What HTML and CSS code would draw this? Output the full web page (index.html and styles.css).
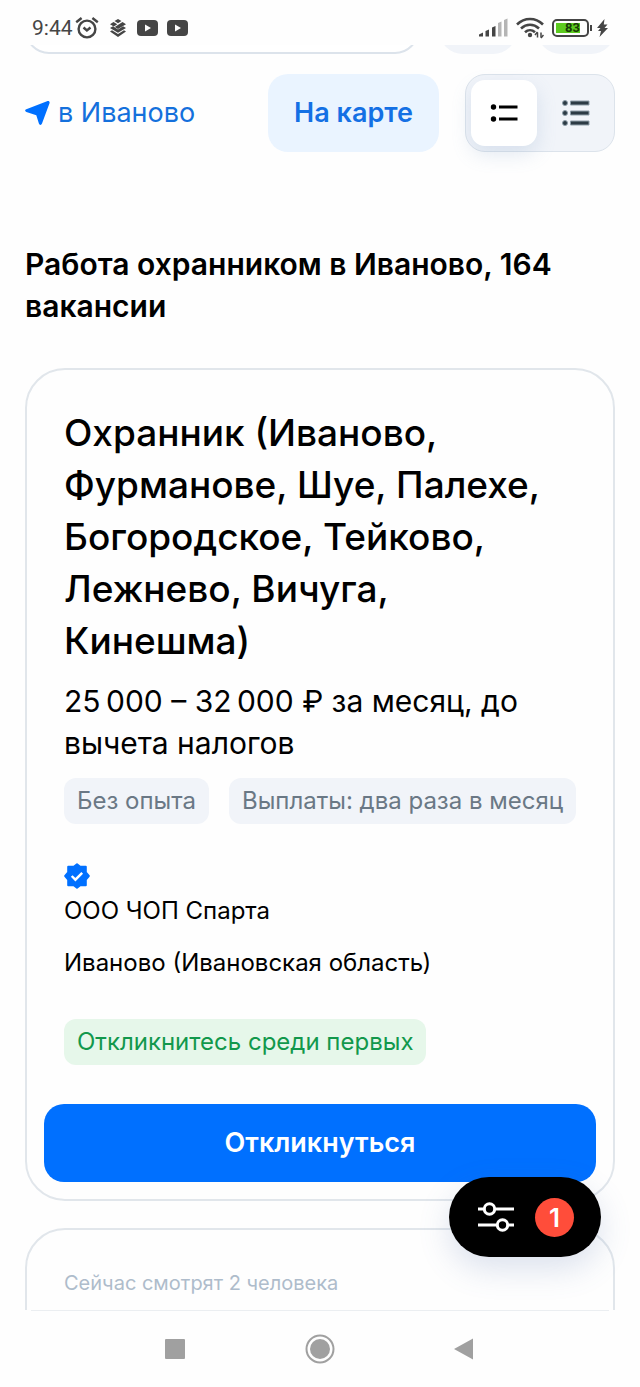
FILE: index.html
```
<!doctype html>
<html lang="ru">
<head>
	<meta charset="UTF-8">
	<meta name="viewport" content="width=device-width, initial-scale=1">
	<title>Работа охранником в Иваново</title>
	<link rel="stylesheet" href="styles.css">
</head>
<body>

	<!-- статус-бар телефона -->
	<header class="status">
		<div class="status-left">
			<span class="clock">9:44</span>
			<svg class="ico-alarm" width="24" height="22" viewBox="0 0 24 22" fill="none" stroke="#454545" stroke-width="2.4">
				<circle cx="12" cy="12" r="8.4"/>
				<path d="M8.5 10.5l3.4 3 3.6-3M1.2 5.2L6.6 1M22.8 5.2L17.4 1"/>
			</svg>
			<svg class="ico-layers" width="18" height="18" viewBox="0 0 18 18" fill="#454545">
				<path d="M9 0l3.500 2.100L9 4.200 5.500 2.100z"/>
				<path d="M4.500 3L8.300 5.300 4.800 7.400 1 5.200zM13.500 3L17 5.200 9 10l-3.200-1.900z"/>
				<path d="M1 9l3-1.800 5 3.200 5-3.200L17 9l-8 4.800z"/>
				<path d="M1 12.500l2-1.200 6 3.700 6-3.700 2 1.200L9 18z"/>
			</svg>
			<svg class="ico-tube" width="21" height="16" viewBox="0 0 21 16"><rect width="21" height="16" rx="4" fill="#454545"/><path d="M8 4.500v7l6-3.500z" fill="#fff"/></svg>
			<svg class="ico-tube" width="21" height="16" viewBox="0 0 21 16"><rect width="21" height="16" rx="4" fill="#454545"/><path d="M8 4.500v7l6-3.500z" fill="#fff"/></svg>
		</div>
		<div class="status-right">
			<svg width="29" height="19" viewBox="0 0 29 19">
				<path d="M0 18.500v-2l4-2v4zM6.500 18.500v-5.500l3.500-1.500v7zM13 18.500V9.500l3.500-1.500v10.500z" fill="#454545"/>
				<path d="M19 18.500V5l3.500-1.500v15zM25 18.500V2l3.500-1.500v18z" fill="#b5b5b5"/>
			</svg>
			<svg width="28" height="22" viewBox="0 0 28 22" fill="none" stroke="#454545" stroke-width="2.600">
				<path d="M1 7.500c7.500-7.400 18.500-7.400 26 0M5 11.500c5.500-5 12.500-5 18 0M9 15.300c3-2.800 7-2.800 10 0"/>
				<circle cx="14" cy="18" r="2.200" fill="#454545" stroke="none"/>
				<path d="M21.500 15.500v5M25 15.500v5" stroke-width="1.500"/>
				<path d="M21.500 15l-2.500 3M25 21l2.500-3" stroke-width="1.500"/>
			</svg>
			<div class="battery"><span class="battery-level">83</span></div>
			<svg width="11" height="18" viewBox="0 0 11 18"><path d="M7.500 0L0 9h3.500L1 12h3l-1.500 6L11 9H7.500l3-3.500H6.800z" fill="#454545"/></svg>
		</div>
	</header>

	<main class="feed">
		<!-- строка поиска, уехавшая вверх -->
		<div class="search-row">
			<input class="search-input" type="text" aria-label="Поиск">
			<button class="search-btn" type="button" aria-label="Найти"></button>
			<button class="search-btn" type="button" aria-label="Ещё"></button>
		</div>

		<div class="toolbar">
			<a class="region" href="#">
				<svg width="26" height="26" viewBox="0 0 26 26"><path d="M1.300 9.200L22 1.200c1.900-.7 3 .3 2.500 2.100L17 23.500c-.7 1.900-2.500 1.900-3.100 0l-2.600-8.200-9.900-3.400c-1.700-.6-1.700-2-.1-2.700z" fill="#0070ff"/></svg>
				<span>в Иваново</span>
			</a>
			<button class="map-btn" type="button">На карте</button>
			<div class="switch">
				<button class="switch-item active" type="button" aria-label="Подробный список">
					<svg width="28" height="18" viewBox="0 0 28 18"><circle cx="3.500" cy="3" r="2.700"/><circle cx="3.500" cy="15" r="2.700"/><path d="M9 1.500H27.500v3H9zM9 13.500H27.500v3H9z"/></svg>
				</button>
				<button class="switch-item" type="button" aria-label="Краткий список">
					<svg width="28" height="26" viewBox="0 0 28 26" fill="#2c3a44" stroke="#8e9da8" stroke-width="1"><circle cx="3" cy="3" r="2.500"/><circle cx="3" cy="13" r="2.500"/><circle cx="3" cy="23" r="2.500"/><path d="M8.500 1h18.500v4H8.500zM8.500 11h18.500v4H8.500zM8.500 21h18.500v4H8.500z"/></svg>
				</button>
			</div>
		</div>

		<h1 class="title">Работа охранником в Иваново, 164 вакансии</h1>

		<article class="card">
			<div class="card-body">
				<h2 class="card-title">Охранник (Иваново, Фурманове, Шуе, Палехе, Богородское, Тейково, Лежнево, Вичуга, Кинешма)</h2>
				<p class="salary">25&#8239;000 – 32&#8239;000 ₽ за месяц, до вычета налогов</p>
				<div class="tags">
					<span class="tag">Без опыта</span>
					<span class="tag">Выплаты: два раза в месяц</span>
				</div>
				<svg class="verified" width="26" height="26" viewBox="0 0 26 26">
					<path d="M13 1.200l3.200 2.600h5.600v5.500L24.800 13l-3 3.700v5.500h-5.600L13 24.800l-3.200-2.600H4.200v-5.500L1.200 13l3-3.700V3.800h5.600z" fill="#0070ff" stroke="#0070ff" stroke-width="2" stroke-linejoin="round"/>
					<path d="M7.700 13l3.700 3.700 6.800-6.900" fill="none" stroke="#fff" stroke-width="2.400"/>
				</svg>
				<p class="company">ООО ЧОП Спарта</p>
				<p class="place">Иваново (Ивановская область)</p>
				<span class="tag tag-green">Откликнитесь среди первых</span>
			</div>
			<button class="respond" type="button">Откликнуться</button>
		</article>

		<article class="card card-next">
			<div class="card-body">
				<p class="watching">Сейчас смотрят 2 человека</p>
			</div>
		</article>

		<button class="filter" type="button" aria-label="Фильтры">
			<svg width="36" height="30" viewBox="0 0 36 30" fill="none" stroke="#fff" stroke-width="3">
				<path d="M0 7h6M17 7h19M0 23h19M30 23h6"/>
				<circle cx="11.500" cy="7" r="5.200"/>
				<circle cx="24.500" cy="23" r="5.200"/>
			</svg>
			<span class="count">1</span>
		</button>
	</main>

	<!-- системные кнопки -->
	<nav class="system">
		<svg width="30" height="30" viewBox="0 0 30 30"><rect x="5" y="5" width="20" height="20" rx="1" fill="#a0a0a0"/></svg>
		<svg width="30" height="30" viewBox="0 0 30 30"><circle cx="15" cy="15" r="13.500" fill="none" stroke="#a0a0a0" stroke-width="2"/><circle cx="15" cy="15" r="10" fill="#a0a0a0"/></svg>
		<svg width="30" height="30" viewBox="0 0 30 30"><path d="M5 15L24 4.500v21z" fill="#a0a0a0"/></svg>
	</nav>

</body>
</html>
```
FILE: styles.css
```
* {margin: 0; padding: 0; box-sizing: border-box;}
body {display: flex; flex-direction: column; height: 100vh; background: #fefefe; color: #000; font-family: Inter, "Noto Sans", sans-serif;}
button {border: 0; font-family: inherit; cursor: pointer;}
svg {display: block; flex: none;}

/* status bar */
.status {display: flex; justify-content: space-between; align-items: center; flex: none; height: 45px; padding: 10px 32px 0; color: #454545;}
.status-left, .status-right {display: flex; align-items: center;}
.clock {font: 21px/24px Roboto, sans-serif; margin-right: 2px;}
.ico-alarm {margin-right: 10px;}
.ico-layers {margin-right: 10px;}
.ico-tube {margin-right: 9px;}
.status-right {gap: 8px;}
.battery {position: relative; width: 37px; height: 18px; padding: 2px; border: 2px solid #454545; border-radius: 5px;}
.battery:after {content: ""; position: absolute; right: -5px; top: 4px; width: 2px; height: 6px; background: #454545;}
.battery-level {display: block; width: 24px; height: 10px; background: #5ccb1f; color: #183a08; font: bold 13px/10px Roboto, sans-serif; text-align: right;}

/* feed */
.feed {position: relative; flex: 1; min-height: 0; overflow: hidden; padding: 0 25px;}
.search-row {display: flex; align-items: flex-end; gap: 20px; height: 9px; overflow: hidden;}
.search-input {flex: 1; min-width: 0; height: 78px; border: 2px solid #dce3eb; border-radius: 24px; background: #fff;}
.search-btn {width: 78px; height: 78px; border-radius: 24px; background: #f1f4f9;}

.toolbar {display: flex; align-items: center; margin-top: 20px;}
.region {display: flex; align-items: center; gap: 7px; margin-right: auto; color: #1470dc; font-size: 27px; line-height: 36px; text-decoration: none;}
.map-btn {height: 78px; padding: 0 26px; margin-right: 26px; border-radius: 20px; background: #eaf4ff; color: #1470e4; font-size: 27px; line-height: 34px; font-weight: 600;}
.switch {display: flex; width: 150px; height: 78px; padding: 5px 0 5px 5px; border: 1px solid #dce3eb; border-radius: 20px; background: #f1f4f9;}
.switch-item {display: flex; flex: 1; align-items: center; justify-content: center; border-radius: 14px; background: none;}
.switch-item.active {flex: none; width: 66px; background: #fff; box-shadow: 0 8px 20px rgba(112, 146, 190, .2);}

.title {margin: 91px 0 41px; font-size: 30px; line-height: 42px; font-weight: 600;}

.card {margin-bottom: 27px; padding: 37px 17px 17px; border: 2px solid #e1e6eb; border-radius: 40px;}
.card-next {padding-bottom: 77px;}
.card-body {padding: 0 20px;}
.card-title {font-size: 37px; line-height: 52px; font-weight: 500;}
.salary {margin: 13px 0 14px; font-size: 30px; line-height: 42px;}
.tags {display: flex; gap: 20px;}
.tag {display: inline-block; padding: 0 13px; border-radius: 12px; background: #f1f4f9; color: #6a7885; font-size: 24px; line-height: 46px; white-space: nowrap;}
.tag-green {background: #e6f7ea; color: #12984c;}
.verified {margin: 39px 0 5px;}
.company, .place {font-size: 24px; line-height: 34px;}
.place {margin: 18px 0 39px;}
.respond {display: block; width: 100%; height: 78px; margin-top: 39px; border-radius: 20px; background: #0070ff; color: #fff; font-size: 27px; line-height: 34px; font-weight: 600;}
.watching {color: #aebccb; font-size: 20px; line-height: 32px;}

/* floating filter button */
.filter {position: absolute; right: 39px; bottom: 53px; display: flex; align-items: center; gap: 21px; height: 80px; padding: 0 27px 0 29px; border-radius: 40px; background: #000; box-shadow: 0 12px 32px rgba(80, 110, 170, .2);}
.count {width: 39px; border-radius: 50%; background: #ff4d3a; color: #fff; font-size: 26px; line-height: 39px; font-weight: 600;}

.system {display: flex; flex: none; align-items: center; justify-content: space-between; height: 77px; margin: 0 31px; padding: 0 130px 0 129px; border-top: 1px solid #ebeef1;}
```
